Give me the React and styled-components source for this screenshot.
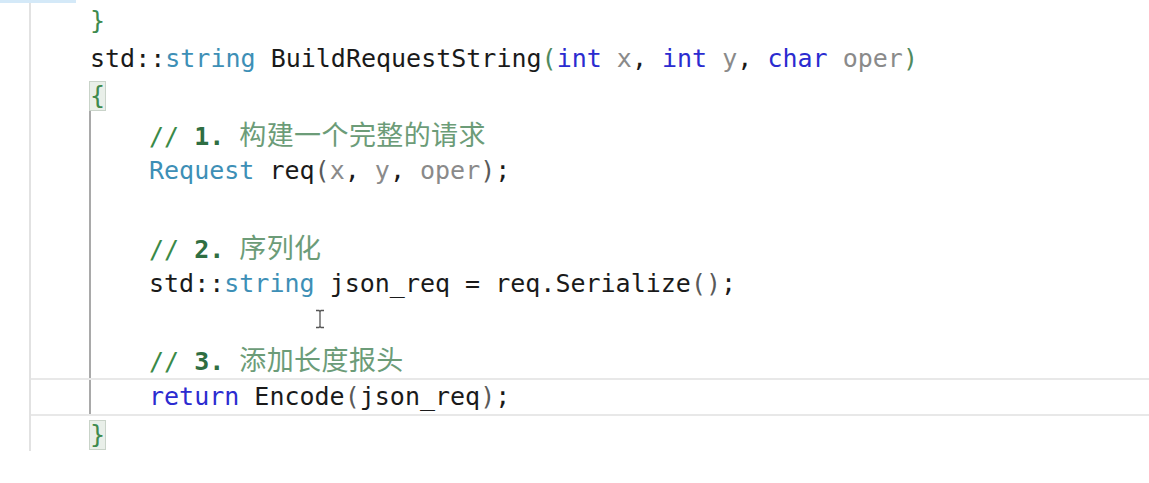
import React from "react";
import styled, { createGlobalStyle } from "styled-components";

const Global = createGlobalStyle`
  html, body {
    margin: 0;
    padding: 0;
    background: #ffffff;
  }
`;

const Editor = styled.div`
  position: relative;
  display: flex;
  width: 1149px;
  height: 483px;
  background: #ffffff;
  overflow: hidden;
  font-family: "DejaVu Sans Mono", "Liberation Mono", monospace;
  font-size: 25px;
  color: #1a1a1a;
`;

const TopMarker = styled.div`
  position: absolute;
  left: 0;
  top: 0;
  width: 76px;
  height: 3px;
  background: #d4e9f8;
`;

const Margin = styled.div`
  width: 29px;
  height: 451px;
  border-right: 2px solid #e2e2e2;
  flex-shrink: 0;
`;

const Code = styled.div`
  flex: 1;
  padding-top: 2px;
`;

const Line = styled.div`
  height: 37.6px;
  line-height: 37.6px;
  padding-left: ${p => p.$indent}px;
  white-space: pre;
  box-sizing: border-box;
  ${p => p.$current && `
    border-top: 2px solid #e8e8e8;
    border-bottom: 2px solid #e8e8e8;
    line-height: 33.6px;
  `}
`;

const Block = styled.div`
  margin-left: 58px;
  border-left: 2px solid #a9a9a9;
  margin-top: -6px;
  padding-top: 6px;
`;

const ReturnBody = styled.div`
  margin-left: 58px;
  padding-left: 58px;
  border-left: 2px solid #a9a9a9;
`;

const Brace = styled.span`
  display: inline-block;
  color: #3e8a4e;
  background: ${p => (p.$matched ? "#e9efe9" : "transparent")};
  box-shadow: ${p => (p.$matched ? "inset 0 0 0 1px #c9d3c9" : "none")};
  line-height: 30px;
  padding: 0 1px;
  margin-left: -1px;
`;

const Type = styled.span`
  color: #3d8fb6;
`;

const Keyword = styled.span`
  color: #2b2bd0;
`;

const Param = styled.span`
  color: #8a8a8a;
`;

const Paren = styled.span`
  color: ${p => p.$tone || "#5a5a5a"};
`;

const Comment = styled.span`
  color: #3a8a48;
`;

const CommentNum = styled.span`
  color: #2f6e42;
  font-weight: bold;
`;

const CommentText = styled.span`
  font-family: "Noto Sans CJK SC", sans-serif;
  font-size: 27px;
  letter-spacing: 0.4px;
  color: #6c9c78;
`;

const Cursor = styled.svg`
  position: absolute;
  left: 315px;
  top: 309px;
`;

const IBeam = () => (
  <Cursor width="10" height="20" viewBox="0 0 10 20">
    <path d="M1 1.5h3l1 1 1-1h3M5 2.5v15M1 18.5h3l1-1 1 1h3" fill="none" stroke="#555" strokeWidth="1.3" />
  </Cursor>
);

const App = () => {
  return (
    <>
      <Global />
      <Editor>
        <TopMarker />
        <Margin />
        <Code>
          <Line $indent={59}>
            <Brace>{"}"}</Brace>
          </Line>
          <Line $indent={59}>
            std::<Type>string</Type> BuildRequestString<Paren $tone="#4f8a5e">(</Paren>
            <Keyword>int</Keyword> <Param>x</Param>, <Keyword>int</Keyword> <Param>y</Param>,{" "}
            <Keyword>char</Keyword> <Param>oper</Param>
            <Paren $tone="#4f8a5e">)</Paren>
          </Line>
          <Line $indent={59}>
            <Brace $matched>{"{"}</Brace>
          </Line>
          <Block>
            <Line $indent={58}>
              <Comment>// </Comment>
              <CommentNum>1. </CommentNum>
              <CommentText>构建一个完整的请求</CommentText>
            </Line>
            <Line $indent={58}>
              <Type>Request</Type> req<Paren>(</Paren>
              <Param>x</Param>, <Param>y</Param>, <Param>oper</Param>
              <Paren>)</Paren>;
            </Line>
            <Line $indent={58} />
            <Line $indent={58}>
              <Comment>// </Comment>
              <CommentNum>2. </CommentNum>
              <CommentText>序列化</CommentText>
            </Line>
            <Line $indent={58}>
              std::<Type>string</Type> json_req = req.Serialize<Paren>()</Paren>;
            </Line>
            <Line $indent={58} />
            <Line $indent={58}>
              <Comment>// </Comment>
              <CommentNum>3. </CommentNum>
              <CommentText>添加长度报头</CommentText>
            </Line>
          </Block>
          <Line $indent={0} $current>
            <ReturnBody>
              <Keyword>return</Keyword> Encode<Paren>(</Paren>json_req<Paren>)</Paren>;
            </ReturnBody>
          </Line>
          <Line $indent={59}>
            <Brace $matched>{"}"}</Brace>
          </Line>
        </Code>
        <IBeam />
      </Editor>
    </>
  );
};

export default App;
